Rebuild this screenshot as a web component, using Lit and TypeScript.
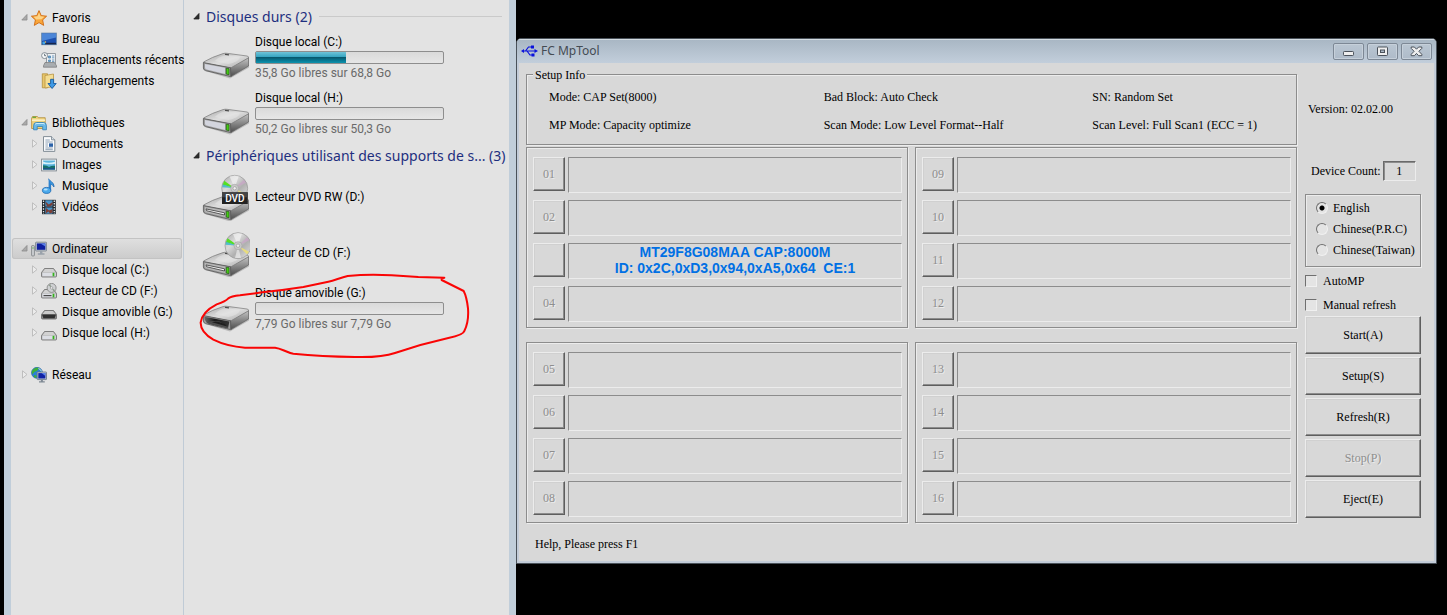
import { LitElement, html, css, svg, nothing, TemplateResult, SVGTemplateResult } from "lit";
import { customElement, state } from "lit/decorators.js";
import { classMap } from "lit/directives/class-map.js";
import { styleMap } from "lit/directives/style-map.js";

type Glyph = SVGTemplateResult;

/* ---------- 16px navigation icons ---------- */

const smallDrive = svg`
  <path d="M3.5 6.5h9l3 4v3.6q0 .9-.9.9H1.4q-.9 0-.9-.9v-3.6z" fill="#a8a8a8" stroke="#6e6e6e" stroke-width=".8"/>
  <path d="M4 7h8l2.6 3.4H1.4z" fill="#d2d2d2"/>
  <rect x="1.3" y="10.8" width="13.4" height="3.5" fill="#dcdee4"/>
  <rect x="11.6" y="10.8" width="1.8" height="3.5" fill="#35b21c"/>`;

const navIcons: Record<string, Glyph> = {
  star: svg`
    <path d="M8 .6l2.2 5 5.4.6-4 3.7 1.1 5.5L8 12.6l-4.7 2.8 1.1-5.5-4-3.7 5.4-.6z" fill="#f9a63a" stroke="#cf6a12" stroke-width=".9" stroke-linejoin="round"/>
    <path d="M8 2.5l1.5 3.8 3.9.5-3 2.4-5.2.4-2.6-2.8 3.9-.5z" fill="#fdd488"/>`,
  desktop: svg`
    <rect x=".6" y="2.1" width="14.8" height="11.6" fill="#1c4fae" stroke="#6f8fae" stroke-width=".9"/>
    <path d="M1 2.6h14v4L1 10z" fill="#4b86d8"/>
    <rect x="1" y="11.8" width="14" height="1.6" fill="#16264c"/>
    <circle cx="2.8" cy="12" r="1.6" fill="#3fa4ee"/>
    <circle cx="4.4" cy="11" r=".8" fill="#f6c044"/>`,
  recent: svg`
    <path d="M5.5 1.5h9v10h-9z" fill="#eef1f3" stroke="#8b9298" stroke-width=".9"/>
    <path d="M7.5 4h2v2h-2zM11 4h2.3M11 5.8h2.3M7.5 8h2v1.5h-2zM11 8h2.3M11 9.6h2.3" stroke="#4f86b2" fill="#75a9cf" stroke-width=".8"/>
    <path d="M4 10.5h9.5l2 3.2v1.5H2.5v-1.5z" fill="#a9adb0" stroke="#777" stroke-width=".7"/>
    <circle cx="3.6" cy="3.6" r="3" fill="#f6f8f9" stroke="#7c868d" stroke-width=".9"/>
    <path d="M3.6 1.8v1.9h1.5" fill="none" stroke="#46545e" stroke-width=".8"/>`,
  downloads: svg`
    <path d="M1.3.8h5.2v14H1.3z" fill="#e8c66a" stroke="#b58f3a" stroke-width=".8"/>
    <path d="M4 2.5L12.5 1v12.5L4 15z" fill="#f4dd92" stroke="#b99445" stroke-width=".8"/>
    <path d="M9.6 6.3h3v4.2h2.6l-4.1 5-4.1-5h2.6z" fill="#3f9ae6" stroke="#165ba0" stroke-width=".9"/>`,
  library: svg`
    <path d="M.6 3.2l1-1.7h4.8l1 1.2h6.8v10.8H.6z" fill="#efd27c" stroke="#b18d3c" stroke-width=".8"/>
    <path d="M1 5.2h13" stroke="#fbf0c4" stroke-width="1.6"/>
    <path d="M1.5 2.3h3.5" stroke="#54a636" stroke-width="1.1"/>
    <path d="M2.6 14.8v-4.3q0-3 3-3h6.6q3.2 0 3.2 3v4.3h-3.7v-3.3H6.2v3.3z" fill="#6bb9e8" stroke="#2f7fb5" stroke-width=".8"/>
    <path d="M4 9.5q.6-1 2-1h6q1.4 0 2 1" stroke="#c9ecfb" fill="none"/>`,
  document: svg`
    <path d="M2.5.6h8l3.3 3.2v11.6H2.5z" fill="#fbfcfd" stroke="#76828c" stroke-width=".9"/>
    <path d="M10.5.6v3.2h3.3" fill="#d5dde4" stroke="#76828c" stroke-width=".8"/>
    <path d="M4.4 4h4.4M4.4 6h7.4M4.4 12h7.4M4.4 13.7h7.4M4.4 8h2.6M4.4 10h2.6" stroke="#8197ad" stroke-width=".9"/>
    <rect x="8" y="7.4" width="4" height="3.4" fill="#2b62a8"/>`,
  image: svg`
    <rect x=".6" y="2.1" width="14.8" height="11.8" fill="#f5f6f7" stroke="#7b858c" stroke-width=".9"/>
    <rect x="2" y="3.5" width="12" height="9" fill="#5cb5dd"/>
    <path d="M2 4.5q5 2.5 12 .3v1.9q-5 1-12 0z" fill="#d5f0fa"/>
    <path d="M2 8.2q4.5.2 6 1.8 3-1.7 6-1.2v3.7H2z" fill="#15706b"/>
    <path d="M2 11.2h12v1.3H2z" fill="#1d4f8e"/>`,
  music: svg`
    <path d="M7.6.7c.6 2.3 5.8 3.4 5.3 8.3-.6-1.7-2-2.6-3.3-2.8v6.3" fill="#3e9be2" stroke="#1b66ae" stroke-width=".8"/>
    <path d="M7.6.7v11.8h2V5z" fill="#2d83cf"/>
    <ellipse cx="5.6" cy="12.4" rx="4.2" ry="3" fill="#4caaec" stroke="#1b66ae" stroke-width=".8"/>
    <ellipse cx="4.7" cy="11.5" rx="2" ry="1" fill="#b4e0fb"/>`,
  video: svg`
    <rect x="1" y=".8" width="13.8" height="14.4" fill="#22282d"/>
    <path d="M2.5 1.5v13.5M13.3 1.5v13.5" stroke="#dfe6ea" stroke-width="1.3" stroke-dasharray="1.4 1.2"/>
    <rect x="4.3" y="1.3" width="7.2" height="6.2" fill="#4a93c7"/>
    <rect x="4.3" y="8.5" width="7.2" height="6.2" fill="#4a93c7"/>
    <path d="M4.3 2.5l3.5 3 3.7-2.6v3l-3 1.6H6zM5 9l3 2.6L11.5 10v3.5l-2.5 1-1.6-2-2.6 2z" fill="#7d3f36"/>`,
  computer: svg`
    <rect x=".6" y="4.6" width="2.8" height="10.3" rx=".6" fill="#cdd0d3" stroke="#787d82" stroke-width=".8"/>
    <path d="M1.4 7h1.2" stroke="#3cab27"/>
    <rect x="4.6" y="1.2" width="11" height="8.8" rx=".6" fill="#c5ccd4" stroke="#6f7984" stroke-width=".8"/>
    <rect x="5.8" y="2.4" width="8.6" height="6.4" fill="#0e1f9f"/>
    <path d="M9.5 2.4h4.9v3.2z" fill="#5a80e8"/>
    <path d="M9 10h2.4v2.2h2.1v1.6H6.8v-1.6H9z" fill="#9aa2ab"/>`,
  drive: smallDrive,
  cd: svg`
    ${smallDrive}
    <rect x="2.5" y="12" width="8" height="1.2" fill="#4a4a4a"/>
    <circle cx="10.6" cy="4.9" r="4.5" fill="#cfd1d3" stroke="#7d7d7d" stroke-width=".8"/>
    <path d="M10.6 4.9L7.5 2.2l1.8-1.3zM10.6 4.9l3.4 2-1.4 1.5z" fill="#8d9a8c"/>
    <circle cx="10.6" cy="4.9" r="1.2" fill="#f1f1f1" stroke="#888" stroke-width=".6"/>`,
  removable: svg`
    <path d="M3.5 6.5h9l3 4v3.6q0 .9-.9.9H1.4q-.9 0-.9-.9v-3.6z" fill="#8d8d8d" stroke="#666" stroke-width=".8"/>
    <path d="M4 7h8l2.6 3H1.4z" fill="#cacaca"/>
    <path d="M1 10.5h14l-1.4 3.8H2.4z" fill="#303030"/>`,
  network: svg`
    <circle cx="6" cy="5.8" r="5.5" fill="#2a80d8" stroke="#1c5aa3" stroke-width=".6"/>
    <path d="M2 2.5Q5-.3 8 .9L6.5 3.6 3.5 5 1 7.5.8 4.5zM3 8l3 .8-1 2.3-2-1z" fill="#3eb03a"/>
    <path d="M7.5 1.5q2.5 1 3 3" stroke="#c9f0d4" fill="none"/>
    <rect x="6.2" y="5" width="9.3" height="7.6" rx=".5" fill="#c0cad6" stroke="#667484" stroke-width=".8"/>
    <rect x="7.3" y="6.1" width="7.1" height="5.4" fill="#0f22a4"/>
    <path d="M10.5 6.1h3.9v2.8z" fill="#5c84ec"/>
    <path d="M9.9 12.7h2v1.5h1.9v1.2H8v-1.2h1.9z" fill="#7f8994"/>`,
};

/* ---------- 48px drive pictures ---------- */

const driveDefs = svg`
  <defs>
    <linearGradient id="top" x1="0" y1="0" x2="1" y2="1">
      <stop offset="0" stop-color="#a4a4a4"/><stop offset=".5" stop-color="#dedede"/><stop offset="1" stop-color="#a9a9a9"/>
    </linearGradient>
    <linearGradient id="side" x1="0" y1="0" x2="0" y2="1">
      <stop offset="0" stop-color="#c4c4c4"/><stop offset="1" stop-color="#4d4d4d"/>
    </linearGradient>
    <linearGradient id="hollow" x1="0" y1="0" x2="1" y2="0">
      <stop offset="0" stop-color="#6a6a6a"/><stop offset=".4" stop-color="#1c1c1c"/><stop offset="1" stop-color="#333"/>
    </linearGradient>
    <linearGradient id="disc" x1="0" y1="0" x2="1" y2="1">
      <stop offset="0" stop-color="#a8a8a8"/><stop offset=".35" stop-color="#dadada"/><stop offset=".6" stop-color="#b0b0b0"/><stop offset="1" stop-color="#e4e4e4"/>
    </linearGradient>
  </defs>`;

const driveBody = (front: Glyph) => svg`
  <path d="M3 37l25 7.5 19-11v-2z" fill="#000" opacity=".18"/>
  <path d="M28 33.5L46.5 23.5V32L29 42.6z" fill="url(#side)" stroke="#606060" stroke-width=".7"/>
  <path d="M1.5 28Q10 23 21 19.6q2-.6 4-.3L45 22q2 .5 1.5 1.8L29.5 33.5q-1 .5-3 .2L2.5 29.2z" fill="url(#top)" stroke="#777" stroke-width=".7"/>
  <path d="M13 27q3-4.5 12-6l13 2.2q-2 5-12 6.8z" fill="#e6e6e6" opacity=".55"/>
  <path d="M23 20.4l4 .5" stroke="#4c4c4c" stroke-width="1.2"/>
  <path d="M1.4 28.6L28.6 33.8V42.6L3.6 36.6Q1.4 36 1.4 34z" fill="#9b9b9b" stroke="#565656" stroke-width=".8"/>
  ${front}`;

const lamp = svg`<path d="M24.3 34.2l2.7.5v6l-2.7-.6z" fill="#44cc14" stroke="#235c12" stroke-width=".7"/>`;

const frontPlain = svg`
  <path d="M3 30l20 3.8v6.2L4.5 35.6Q3 35 3 33.5z" fill="#d3d5de"/>${lamp}`;
const frontTray = svg`
  <path d="M3 30l20 3.8v6.2L4.5 35.6Q3 35 3 33.5z" fill="#b9b9b9"/>
  <path d="M4 31.9l18.5 3.9v2.2L4.5 33.7z" fill="#f2f2f2" stroke="#3a3a3a" stroke-width=".8"/>${lamp}`;
const frontOpen = svg`
  <path d="M2.4 29.7L27.4 34.4 26 41.2 6 36.4Q2.4 34 2.4 29.7z" fill="url(#hollow)"/>
  <path d="M5.5 35.2q5-2 12-.6l8.5 5.4v1.2L7 36.7z" fill="#4e4e4e"/>
  <path d="M10 35.2q5-1.8 13 2l2 2.4z" fill="#1e1e1e"/>`;

const disc = (cx: number, cy: number) => svg`
  <circle cx=${cx} cy=${cy} r="13" fill="url(#disc)" stroke="#969696" stroke-width=".7"/>
  <g transform="translate(${cx} ${cy})">
    <path d="M0 0L-5-11.8 0-12.8 4-12z" fill="#f2f2f2" opacity=".7"/>
    <path d="M0 0l-12-3.5 1.6-4z" fill="#55e020"/>
    <path d="M0 0l-12.5-1 .6-3z" fill="#34b8c8" opacity=".8"/>
    <path d="M0 0l11 6-2 2.5z" fill="#e8dc7c"/>
    <path d="M0 0l9-8.5 2.5 3z" fill="#c9a5c8" opacity=".7"/>
    <path d="M0 0l3 12.3-6 0z" fill="#f4f4f4" opacity=".6"/>
    <circle r="4" fill="#c9c9c9" stroke="#a2a2a2" stroke-width=".6"/>
    <circle r="1.7" fill="#efefef" stroke="#8e8e8e" stroke-width=".6"/>
  </g>`;

const driveIcons: Record<string, Glyph> = {
  hdd: svg`${driveDefs}${driveBody(frontPlain)}`,
  dvd: svg`${driveDefs}
    <g transform="translate(0 4)">${driveBody(frontTray)}</g>
    ${disc(32.7, 15.3)}
    <rect x="20" y="19.3" width="25.8" height="11.7" fill="#222"/>
    <rect x="20" y="19.3" width="25.8" height="5" fill="#444"/>
    <text x="32.9" y="28.5" text-anchor="middle" class="badge">DVD</text>`,
  cd: svg`${driveDefs}
    <g transform="translate(0 4)">${driveBody(frontTray)}</g>
    ${disc(36, 16.7)}`,
  removable: svg`${driveDefs}<g transform="translate(0 2)">${driveBody(frontOpen)}</g>`,
};

interface NavItem { label: string; icon: string; leaf?: boolean }
interface NavGroup extends NavItem { open: boolean; current?: boolean; items: NavItem[] }

const navGroups: NavGroup[] = [
  { label: "Favoris", icon: "star", open: true, items: [
    { label: "Bureau", icon: "desktop", leaf: true },
    { label: "Emplacements récents", icon: "recent", leaf: true },
    { label: "Téléchargements", icon: "downloads", leaf: true },
  ] },
  { label: "Bibliothèques", icon: "library", open: true, items: [
    { label: "Documents", icon: "document" },
    { label: "Images", icon: "image" },
    { label: "Musique", icon: "music" },
    { label: "Vidéos", icon: "video" },
  ] },
  { label: "Ordinateur", icon: "computer", open: true, current: true, items: [
    { label: "Disque local (C:)", icon: "drive" },
    { label: "Lecteur de CD (F:)", icon: "cd" },
    { label: "Disque amovible (G:)", icon: "removable" },
    { label: "Disque local (H:)", icon: "drive" },
  ] },
  { label: "Réseau", icon: "network", open: false, items: [] },
];

interface Volume { name: string; icon: string; used?: number; free?: string; circled?: boolean }

const sections: { title: string; count: number; volumes: Volume[] }[] = [
  { title: "Disques durs", count: 2, volumes: [
    { name: "Disque local (C:)", icon: "hdd", used: 48, free: "35,8 Go libres sur 68,8 Go" },
    { name: "Disque local (H:)", icon: "hdd", used: 0, free: "50,2 Go libres sur 50,3 Go" },
  ] },
  { title: "Périphériques utilisant des supports de s...", count: 3, volumes: [
    { name: "Lecteur DVD RW (D:)", icon: "dvd" },
    { name: "Lecteur de CD (F:)", icon: "cd" },
    { name: "Disque amovible (G:)", icon: "removable", used: 0, free: "7,79 Go libres sur 7,79 Go", circled: true },
  ] },
];

@customElement("explorer-window")
export class ExplorerWindow extends LitElement {
  static styles = css`
    :host {
      display: flex;
      box-sizing: border-box;
      border: solid #c1ceda;
      border-width: 0 7px;
      background: #e3e3e3;
      color: #000;
      font: 12px/21px Roboto, "Noto Sans", sans-serif;
    }
    .nav {
      flex: 0 0 172px;
      min-width: 0;
      border-right: 1px solid #c0cbd6;
      padding: 7px 0;
      box-sizing: content-box;
    }
    ul { list-style: none; margin: 0; padding: 0; }
    .group { margin-bottom: 21px; }
    .row {
      display: flex;
      align-items: center;
      height: 21px;
      padding-left: 9px;
      margin: 0 1px;
      color: inherit;
      text-decoration: none;
      white-space: nowrap;
    }
    .child { padding-left: 19px; }
    .label { padding-top: 2px; }
    .current {
      border-radius: 3px;
      background: linear-gradient(#e0e0e0, #cbcbcb);
      box-shadow: inset 0 0 0 1px #c3c3c3;
    }
    .twisty { flex: none; width: 7px; height: 9px; margin-right: 3px; }
    .icon { flex: none; width: 16px; height: 16px; margin-right: 5px; }
    .content { flex: 1; min-width: 0; padding: 3px 7px 0 9px; }
    .heading {
      display: flex;
      align-items: center;
      height: 27px;
      margin: 0;
      color: #1e2f7f;
      font-family: "Noto Sans", "Open Sans", sans-serif;
      font-size: 14px;
      font-weight: 400;
      white-space: nowrap;
    }
    .heading .twisty { margin-right: 6px; }
    .rule { flex: 1; height: 1px; margin-left: 7px; background: #cacaca; }
    .volume {
      position: relative;
      display: flex;
      align-items: center;
      box-sizing: border-box;
      height: 56px;
      padding: 0 0 1px 9px;
    }
    .picture { flex: none; align-self: flex-start; width: 48px; height: 48px; margin: 4px 5px 0 0; }
    .badge { font: 500 10px Roboto, "Noto Sans", sans-serif; fill: #fff; }
    .text { display: flex; flex-direction: column; line-height: 16px; }
    .gauge {
      box-sizing: border-box;
      width: 189px;
      height: 13px;
      margin: 1px 0;
      border: 1px solid #8e8e8e;
      border-radius: 2px;
      background: linear-gradient(#dadada, #e6e6e6);
    }
    .fill {
      height: 100%;
      background: linear-gradient(#6fc3d8, #35a5c1 45%, #07596f 50%, #087d98 80%, #0e93ae);
    }
    .free { color: #6a6a6a; }
    .ink {
      position: absolute;
      left: 0;
      top: -8px;
      width: 280px;
      height: 90px;
      overflow: visible;
      pointer-events: none;
    }
  `;

  private twisty(open: boolean, dark = false) {
    return html`<svg class="twisty" viewBox="0 0 7 9" aria-hidden="true">
      ${open
        ? svg`<path d="M6 1.5V7H.8z" fill=${dark ? "#2c2c2c" : "#a9a9a9"} stroke=${dark ? "#222" : "#8a8a8a"} stroke-width=".8"/>`
        : svg`<path d="M1.5.8L6 4.5 1.5 8.2z" fill="#ececec" stroke="#b9b9b9" stroke-width=".9"/>`}
    </svg>`;
  }

  private navRow(item: NavItem, child: boolean, open = false, current = false) {
    return html`<a href="#" class=${classMap({ row: true, child, current })}>
      ${item.leaf ? html`<span class="twisty"></span>` : this.twisty(open)}
      <svg class="icon" viewBox="0 0 16 16" aria-hidden="true">${navIcons[item.icon]}</svg>
      <span class="label">${item.label}</span>
    </a>`;
  }

  private volume(v: Volume) {
    return html`<div class="volume">
      <svg class="picture" viewBox="0 0 48 48" aria-hidden="true">${driveIcons[v.icon]}</svg>
      <div class="text">
        <span>${v.name}</span>
        ${v.free
          ? html`<div class="gauge">
                ${v.used ? html`<div class="fill" style=${styleMap({ width: v.used + "%" })}></div>` : nothing}
              </div>
              <span class="free">${v.free}</span>`
          : nothing}
      </div>
      ${v.circled
        ? html`<svg class="ink" viewBox="24 324 840 270" aria-hidden="true">
            <path d="M778 338L700 336 620 331Q550 327 488 333C465 338 450 346 430 350L355 366Q290 376 232 382L165 391Q138 394 130 400 122 409 95 418 52 440 47 472C46 495 65 512 85 524Q125 544 180 548L270 548C290 550 302 562 325 566Q410 574 510 576 590 578 630 564C700 540 740 530 790 519Q835 510 838 498 852 470 849 430 845 395 836 378L800 360 770 345 770 340 778 338"
              fill="none" stroke="#fa0505" stroke-width="6" stroke-linejoin="round" stroke-linecap="round"/>
          </svg>`
        : nothing}
    </div>`;
  }

  render() {
    return html`
      <nav class="nav" aria-label="Navigation">
        ${navGroups.map((g) => html`<ul class="group">
          <li>${this.navRow(g, false, g.open, g.current)}</li>
          ${g.items.map((i) => html`<li>${this.navRow(i, true)}</li>`)}
        </ul>`)}
      </nav>
      <main class="content">
        ${sections.map((s) => html`<section>
          <h2 class="heading">${this.twisty(true, true)}<span>${s.title} (${s.count})</span><span class="rule"></span></h2>
          ${s.volumes.map((v) => this.volume(v))}
        </section>`)}
      </main>`;
  }
}

interface Port { id: string; lines?: string[] }

const banks: Port[][] = [
  [{ id: "01" }, { id: "02" }, { id: "", lines: ["MT29F8G08MAA CAP:8000M", "ID: 0x2C,0xD3,0x94,0xA5,0x64  CE:1"] }, { id: "04" }],
  [{ id: "09" }, { id: "10" }, { id: "11" }, { id: "12" }],
  [{ id: "05" }, { id: "06" }, { id: "07" }, { id: "08" }],
  [{ id: "13" }, { id: "14" }, { id: "15" }, { id: "16" }],
];

const setupInfo = [
  "Mode: CAP Set(8000)", "Bad Block: Auto Check", "SN: Random Set",
  "MP Mode: Capacity optimize", "Scan Mode: Low Level Format--Half", "Scan Level: Full Scan1 (ECC = 1)",
];

@customElement("mptool-window")
export class MpToolWindow extends LitElement {
  static styles = css`
    :host {
      display: block;
      box-sizing: border-box;
      border: 1px solid #4a525a;
      border-radius: 5px 5px 0 0;
      background: #d8d8d8;
      box-shadow: inset 0 0 0 2px #c3ccd8;
      color: #000;
      font: 12px/14px "Liberation Serif", "Times New Roman", serif;
      overflow: hidden;
    }
    .titlebar {
      display: flex;
      align-items: center;
      gap: 3px;
      height: 24px;
      padding: 0 4px;
      background: linear-gradient(#a8b6c3, #c2cedb);
      box-shadow: inset 0 1px #d3dbe2;
      color: #444b53;
    }
    .usb { width: 17px; height: 14px; }
    .title { flex: 1; margin: 0; font: 12px/18px "Noto Sans", "Open Sans", sans-serif; }
    .caption {
      display: grid;
      place-items: center;
      width: 31px;
      height: 17px;
      padding: 0;
      border: 1px solid #7d8895;
      border-radius: 2px;
      background: linear-gradient(#bac6d2, #aebbc9);
      box-shadow: inset 0 0 0 1px #c6d0da;
    }
    .caption svg { width: 13px; height: 11px; }
    .body {
      display: grid;
      grid-template-columns: minmax(0, 1fr) 116px;
      gap: 8px;
      padding: 4px 15px 0 9px;
    }
    fieldset { margin: 0; min-width: 0; border: 0; padding: 0; }
    .etched {
      border: 1px solid #8c8c8c;
      box-shadow: 1px 1px #ececec, inset 1px 1px #ececec;
    }
    .setup { position: relative; margin-top: 7px; height: 71px; box-sizing: border-box; }
    .caption-text {
      position: absolute;
      top: -7px;
      left: 6px;
      padding: 0 2px;
      background: #d8d8d8;
    }
    .facts {
      display: grid;
      grid-template-columns: 275fr 269fr 204fr;
      row-gap: 14px;
      margin: 0;
      padding: 15px 0 0 22px;
      list-style: none;
      white-space: nowrap;
    }
    .banks {
      display: grid;
      grid-template-columns: repeat(2, minmax(0, 1fr));
      gap: 14px 7px;
      margin-top: 2px;
    }
    .bank { display: grid; gap: 7px; padding: 9px 5px 5px 6px; }
    .port { display: flex; gap: 3px; height: 36px; }
    .raised {
      box-sizing: border-box;
      padding: 0;
      border: 1px solid;
      border-color: #ececec #5e5e5e #5e5e5e #ececec;
      border-radius: 0;
      background: #d8d8d8;
      box-shadow: inset -1px -1px #8c8c8c, inset 1px 1px #d0d0d0;
      color: #000;
      font: inherit;
    }
    .raised:disabled { color: #8e8e8e; text-shadow: 1px 1px #ececec; }
    .slot { width: 32px; height: 34px; }
    .readout {
      flex: 1;
      box-sizing: border-box;
      border: 1px solid;
      border-color: #8c8c8c #ececec #ececec #8c8c8c;
      color: #0070e4;
      font: 700 14px/16px "Liberation Sans", Arial, sans-serif;
      text-align: center;
      white-space: pre;
    }
    .side { display: flex; flex-direction: column; }
    .version { margin: 35px 0 0 3px; }
    .count { display: flex; align-items: center; gap: 2px; margin: 45px 0 13px 6px; white-space: nowrap; }
    .count input {
      box-sizing: border-box;
      width: 33px;
      height: 20px;
      padding: 0;
      border: 1px solid;
      border-color: #6a6a6a #ececec #ececec #6a6a6a;
      box-shadow: inset 1px 1px #8c8c8c;
      background: #d8d8d8;
      font: inherit;
      text-align: center;
    }
    .languages { display: grid; gap: 7px; padding: 6px 0 9px 10px; margin-bottom: 7px; }
    .option { display: flex; align-items: center; gap: 5px; height: 14px; white-space: nowrap; }
    .option input {
      flex: none;
      appearance: none;
      box-sizing: border-box;
      width: 12px;
      height: 12px;
      margin: 0;
      border: 1px solid;
      border-color: #707070 #f0f0f0 #f0f0f0 #707070;
      background: #e4e4e4;
    }
    .option input[type="radio"] { border-radius: 50%; }
    .option input[type="radio"]:checked { background: radial-gradient(circle, #000 2px, #e4e4e4 3px); }
    .option input[type="checkbox"]:checked { box-shadow: inset 0 0 0 3px #e4e4e4; background: #000; }
    .ticks { display: grid; gap: 10px; margin-bottom: 4px; }
    .ticks .option { gap: 6px; }
    .actions { display: grid; gap: 3px; }
    .action { height: 38px; }
    .help { margin: 0; padding: 14px 0 12px 18px; }
  `;

  @state() private language = "English";

  private caption(label: string, drawing: Glyph): TemplateResult {
    return html`<button class="caption" aria-label=${label}>
      <svg viewBox="0 0 13 11" aria-hidden="true">${drawing}</svg>
    </button>`;
  }

  render() {
    return html`
      <header class="titlebar">
        <svg class="usb" viewBox="0 0 17 14" aria-hidden="true">
          <path d="M2 7h13M4.5 7l3-4H10M6 7l3 4h2" fill="none" stroke="#0a12dc" stroke-width="1.2"/>
          <path d="M0 7l3-2v4zM17 7l-3.5-2v4z" fill="#0a12dc"/>
          <rect x="10" y="1.5" width="3" height="3" fill="#0a12dc"/>
          <rect x="10.5" y="9.5" width="3" height="3" fill="#0a12dc"/>
        </svg>
        <h1 class="title">FC MpTool</h1>
        ${this.caption("Minimize", svg`<rect x="1.5" y="5.5" width="10" height="4" rx=".8" fill="#eee" stroke="#4b525b"/>`)}
        ${this.caption("Maximize", svg`<rect x="1.5" y="1" width="10" height="8.5" rx=".8" fill="#eee" stroke="#4b525b"/><rect x="4.5" y="4" width="4" height="2.5" fill="#aab7c4" stroke="#4b525b"/>`)}
        ${this.caption("Close", svg`<path d="M1.2 1h3.2l2.1 2.2L8.6 1h3.2v1.4L8.9 5.3l2.9 3V9.7H8.6L6.5 7.4 4.4 9.7H1.2V8.3l2.9-3-2.9-2.9z" fill="#eee" stroke="#4b525b"/>`)}
      </header>
      <div class="body">
        <div>
          <section class="setup etched" aria-labelledby="setup-title">
            <span class="caption-text" id="setup-title">Setup Info</span>
            <ul class="facts">${setupInfo.map((t) => html`<li>${t}</li>`)}</ul>
          </section>
          <div class="banks">
            ${banks.map((bank) => html`<div class="bank etched">
              ${bank.map((p) => html`<div class="port">
                <button class="raised slot" ?disabled=${!p.lines} aria-label=${p.id || "03"}>${p.id}</button>
                <div class="readout">${(p.lines ?? []).map((l) => html`<div>${l}</div>`)}</div>
              </div>`)}
            </div>`)}
          </div>
        </div>
        <aside class="side">
          <span class="version">Version: 02.02.00</span>
          <div class="count">
            <label for="count">Device Count:</label>
            <input id="count" type="text" readonly .value=${"1"} />
          </div>
          <fieldset class="languages etched" aria-label="Language">
            ${["English", "Chinese(P.R.C)", "Chinese(Taiwan)"].map((l) => html`<label class="option">
              <input type="radio" name="language" .checked=${this.language === l} @change=${() => (this.language = l)} />${l}
            </label>`)}
          </fieldset>
          <div class="ticks">
            <label class="option"><input type="checkbox" />AutoMP</label>
            <label class="option"><input type="checkbox" />Manual refresh</label>
          </div>
          <div class="actions">
            ${["Start(A)", "Setup(S)", "Refresh(R)", "Stop(P)", "Eject(E)"].map((a) => html`
              <button class="raised action" ?disabled=${a === "Stop(P)"}>${a}</button>`)}
          </div>
        </aside>
      </div>
      <p class="help">Help, Please press F1</p>`;
  }
}

@customElement("app-root")
export class AppRoot extends LitElement {
  static styles = css`
    :host {
      display: flex;
      align-items: flex-start;
      min-height: 100vh;
      box-sizing: border-box;
      padding: 0 10px 0 4px;
      background: #000;
    }
    .explorer { flex: 0 0 512px; min-width: 0; align-self: stretch; }
    .tool { flex: 1; min-width: 0; margin-top: 38px; }
  `;

  render() {
    return html`
      <explorer-window class="explorer"></explorer-window>
      <mptool-window class="tool"></mptool-window>`;
  }
}
